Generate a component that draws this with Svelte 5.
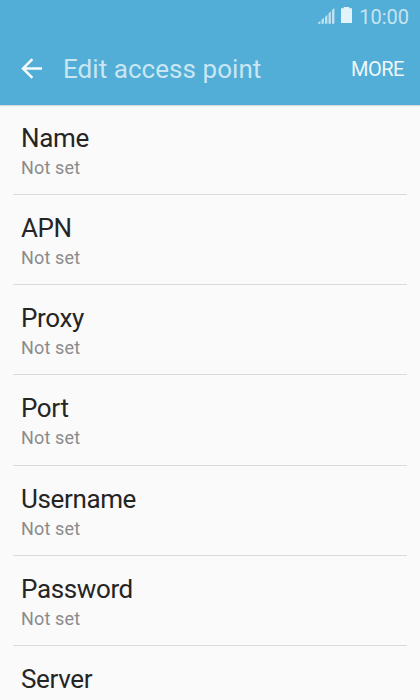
<script>
  const rows = ['Name', 'APN', 'Proxy', 'Port', 'Username', 'Password', 'Server'];
</script>

<div class="screen">
  <header>
    <div class="status">
      <svg class="signal" width="17" height="16" viewBox="0 0 17 16" fill="#bfe1f1">
        <path d="M0 15.8v-1l2.4-1.8v2.8zM3.5 15.8v-4l2.4-2v6zM7 15.8V9l2.4-2.2v9zM10.5 15.8V5.6l2.4-2.4v12.6zM14 15.8V2l2.4-2v15.8z" />
      </svg>
      <svg class="battery" width="11" height="16" viewBox="0 0 11 16" fill="#e4f3fa">
        <path d="M2.7 0h5.6v1.2H11V16H0V1.2h2.7z" />
      </svg>
      <span class="clock">10:00</span>
    </div>
    <div class="bar">
      <svg class="back" width="22" height="22" viewBox="0 0 22 22" fill="none" stroke="#f4fafd" stroke-width="2.5">
        <path d="M21 10.5H2M11.4 1.2L2 10.5L11.4 19.8" />
      </svg>
      <h1>Edit access point</h1>
      <span class="more">MORE</span>
    </div>
  </header>
  <main>
    {#each rows as row, i}
      <section>
        <div class="title">{row}</div>
        {#if i < rows.length - 1}
          <div class="value">Not set</div>
        {/if}
      </section>
    {/each}
  </main>
</div>

<style>
  :global(body) { margin: 0; }
  .screen { width: 420px; height: 700px; overflow: hidden; background: #fafafa; font-family: Roboto, sans-serif; }
  header { height: 105px; background: #52aed6; box-shadow: 0 1px 1px #d4d8dc; }
  .status { height: 33px; display: flex; align-items: flex-start; justify-content: flex-end; padding-right: 11px; box-sizing: border-box; color: #c6e4f2; }
  .signal { margin-top: 8px; }
  .battery { margin: 7px 0 0 6px; }
  .clock { margin-left: 7px; font-size: 20px; line-height: 34px; }
  .bar { height: 72px; display: flex; align-items: center; padding: 0 16px 0 21px; }
  h1 { margin: 0 0 0 20px; flex: 1; font-size: 26px; font-weight: 400; letter-spacing: 0.05px; color: #c9e6f3; white-space: nowrap; }
  .more { font-size: 20px; letter-spacing: -0.5px; color: #eef8fc; }
  section { box-sizing: border-box; height: 90.15px; margin: 0 13px; padding: 17px 8px 0; border-bottom: 1px solid #dadada; }
  .title { font-size: 26px; line-height: 32px; letter-spacing: -0.37px; color: #252525; }
  .value { font-size: 18px; line-height: 28px; letter-spacing: 0.15px; color: #8b8b8b; }
</style>
